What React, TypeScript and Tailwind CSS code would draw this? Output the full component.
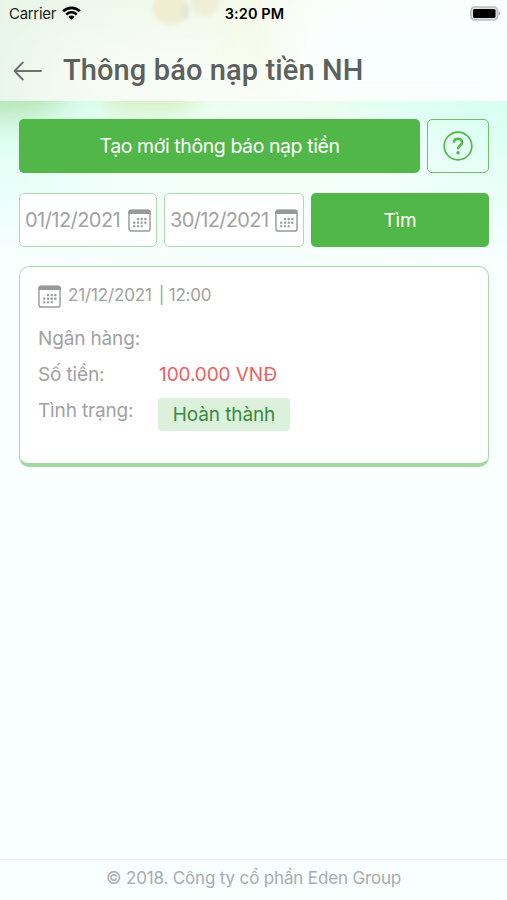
import type { ReactNode } from "react";

const DOTS = [
  [10.5, 10.5], [14.3, 10.5], [18.1, 10.5],
  [6.5, 14.2], [10.5, 14.2], [14.3, 14.2], [18.1, 14.2],
  [6.5, 18], [10.5, 18], [14.3, 18],
];

function CalendarIcon() {
  return (
    <svg width="23" height="23" viewBox="0 0 24 24" className="shrink-0" fill="none">
      <rect x="1" y="1.5" width="22" height="21.5" rx="2.5" stroke="#999b9d" strokeWidth="1.5" />
      <path d="M0.3 5.2V3.2a2.8 2.8 0 0 1 2.8-2.8h17.8a2.8 2.8 0 0 1 2.8 2.8v2z" fill="#97999b" />
      {DOTS.map(([x, y]) => (
        <rect key={`${x}-${y}`} x={x - 1.15} y={y - 1.15} width="2.3" height="2.3" rx="0.6" fill="#97999b" />
      ))}
    </svg>
  );
}

function StatusBar() {
  return (
    <div className="flex h-7 items-center pl-[9px] pr-[6px] text-black">
      <div className="flex flex-1 items-center gap-[6px]">
        <span className="text-[15px] tracking-[-0.3px] text-[#222]">Carrier</span>
        <svg width="19" height="14" viewBox="0 0 19 14" fill="none" stroke="#000" className="mt-[-2px]">
          <path d="M1.2 5.2a11.8 11.8 0 0 1 16.6 0" strokeWidth="2.7" />
          <path d="M4.3 8.5a7.4 7.4 0 0 1 10.4 0" strokeWidth="2.5" />
          <path d="M9.5 13.8 6.4 10.8a4.4 4.4 0 0 1 6.2 0z" fill="#000" stroke="none" />
        </svg>
      </div>
      <span className="mr-px text-[14.5px] font-semibold tracking-[0.1px]">3:20 PM</span>
      <div className="flex flex-1 justify-end">
        <svg width="31" height="15" viewBox="0 0 31 15" className="mt-[-1px]">
          <rect x="1" y="1" width="26.5" height="13" rx="3.8" fill="#dfe3e1" stroke="#b9bdbb" strokeWidth="1.5" />
          <rect x="3" y="3" width="22.5" height="9" rx="1.5" fill="#000" />
          <path d="M28.7 5.2c2 .8 2 3.8 0 4.6z" fill="#a5aaa8" />
        </svg>
      </div>
    </div>
  );
}

function Backdrop() {
  return (
    <div className="absolute inset-x-0 top-0 h-[260px] overflow-hidden">
      <div className="absolute inset-0 bg-gradient-to-b from-[#d8fff2] from-40% to-[#f8fffe]" />
      <div className="absolute left-[180px] top-[85px] h-[60px] w-[180px] rounded-full bg-[#e6fde9] blur-lg" />
      <div className="absolute left-[-60px] top-[50px] h-[66px] w-[130px] rounded-full bg-[#b4e3b0] blur-lg" />
      <div className="absolute left-[105px] top-[76px] h-[42px] w-[90px] rounded-full bg-[#cbecb0] blur-md" />
      <div className="absolute left-[70px] top-[120px] h-[110px] w-[370px] rounded-full bg-[#f6fffb] blur-2xl" />
    </div>
  );
}

function Header() {
  return (
    <header className="relative h-[101px] overflow-hidden bg-gradient-to-r from-[#e8f6e8] via-[#f5fbec] to-[#fafffe]">
      <div className="absolute left-[30px] top-[45px] h-[75px] w-[420px] rounded-full bg-white/80 blur-2xl" />
      <div className="absolute left-[225px] top-[-10px] h-[80px] w-[55px] rounded-full bg-[#f5fae6] blur-xl" />
      <div className="absolute left-[290px] top-[-10px] h-[120px] w-[250px] bg-[#f9fffe] blur-xl" />
      <div className="absolute left-[153px] top-[-10px] size-[35px] rounded-full bg-[#f0eed2] blur-[2px]" />
      <div className="absolute left-[191px] top-[-12px] size-[28px] rounded-full bg-[#efeed8] blur-[2px]" />
      <div className="absolute left-[183px] top-[5px] h-[14px] w-[5px] rounded-full bg-[#d8e3de] blur-[2px]" />
      <div className="relative">
        <StatusBar />
        <div className="flex h-[85px] items-center pl-[13px]">
          <svg width="30" height="20" viewBox="0 0 30 20" fill="none" stroke="#6b706c" strokeWidth="1.8" strokeLinecap="round" strokeLinejoin="round">
            <path d="M28 10H1.5M9.8 1.5 1.5 10l8.3 8.5" />
          </svg>
          <h1 className="ml-5 whitespace-nowrap font-[Roboto,sans-serif] text-[29px] font-medium tracking-[0.12px] text-[#5c615d]">
            Thông báo nạp tiền NH
          </h1>
        </div>
      </div>
    </header>
  );
}

function DateField({ value, className }: { value: string; className: string }) {
  return (
    <div className={`flex h-[54px] items-center justify-between rounded-[5px] border border-[#acdcab] bg-white px-[5px] text-[20px] text-[#a0a2a3] ${className}`}>
      <span>{value}</span>
      <CalendarIcon />
    </div>
  );
}

function Row({ label, children }: { label: ReactNode; children?: ReactNode }) {
  return (
    <div className="flex h-9 items-start text-[19px] leading-9">
      <div className="w-[120px] shrink-0 tracking-[-0.15px] text-[#a0a2a3]">{label}</div>
      {children}
    </div>
  );
}

export default function App() {
  return (
    <div className="relative h-[900px] w-[507px] overflow-hidden bg-[#f9fffe] font-[Inter,sans-serif]">
      <Backdrop />
      <div className="relative flex h-full flex-col">
        <Header />

        <main className="flex-1 pl-[19px] pr-[18px] pt-[18px]">
          <div className="flex gap-[7px]">
            <button className="h-[54px] w-[401px] rounded-[5px] bg-[#50b748] pt-[2px] text-[19.5px] tracking-[-0.42px] text-white">
              Tạo mới thông báo nạp tiền
            </button>
            <button className="flex h-[54px] flex-1 items-center justify-center rounded-[5px] border border-[#6cc367]">
              <svg width="30" height="30" viewBox="0 0 30 30" fill="none" stroke="#50b748">
                <circle cx="15" cy="15" r="13.8" strokeWidth="1.7" />
                <path d="M10.9 11.8C11 6.4 19.1 6.7 19.1 11.4c0 3.2-4.1 3.1-4.1 6.8" strokeWidth="2.5" />
                <circle cx="15" cy="21.7" r="1.7" fill="#50b748" stroke="none" />
              </svg>
            </button>
          </div>

          <div className="mt-[20px] flex gap-[7px]">
            <DateField value="01/12/2021" className="w-[138px] tracking-[-0.55px]" />
            <DateField value="30/12/2021" className="w-[140px] tracking-[-0.65px]" />
            <button className="h-[54px] flex-1 rounded-[5px] bg-[#50b748] pt-[2px] text-[19px] tracking-[-0.2px] text-white">Tìm</button>
          </div>

          <section className="mt-[19px] h-[201px] rounded-[10px] border border-b-[4px] border-[#acdcab] border-b-[#a3d8a0] bg-white pl-[18px] pt-[17px]">
            <div className="flex h-6 items-center gap-[7px] text-[17px] text-[#a0a2a3]">
              <CalendarIcon />
              <span className="tracking-[-0.15px]">21/12/2021</span>
              <span className="tracking-[-0.2px]">| 12:00</span>
            </div>
            <div className="mt-[13px]">
              <Row label="Ngân hàng:" />
              <Row label="Số tiền:">
                <span className="pl-px tracking-[-0.1px] text-[#ec5f62]">100.000 VNĐ</span>
              </Row>
              <Row label="Tình trạng:">
                <span className="mt-[5px] flex h-[33px] w-[132px] items-center justify-center rounded-[4px] bg-[#dbf1db] pt-px tracking-[-0.1px] text-[#3b8841]">
                  Hoàn thành
                </span>
              </Row>
            </div>
          </section>
        </main>

        <footer className="flex h-[41px] justify-center border-t border-[#eef3f2] pt-[5px] text-[17px] leading-[26px] tracking-[-0.16px] text-[#a9adac]">
          © 2018. Công ty cổ phần Eden Group
        </footer>
      </div>
    </div>
  );
}
